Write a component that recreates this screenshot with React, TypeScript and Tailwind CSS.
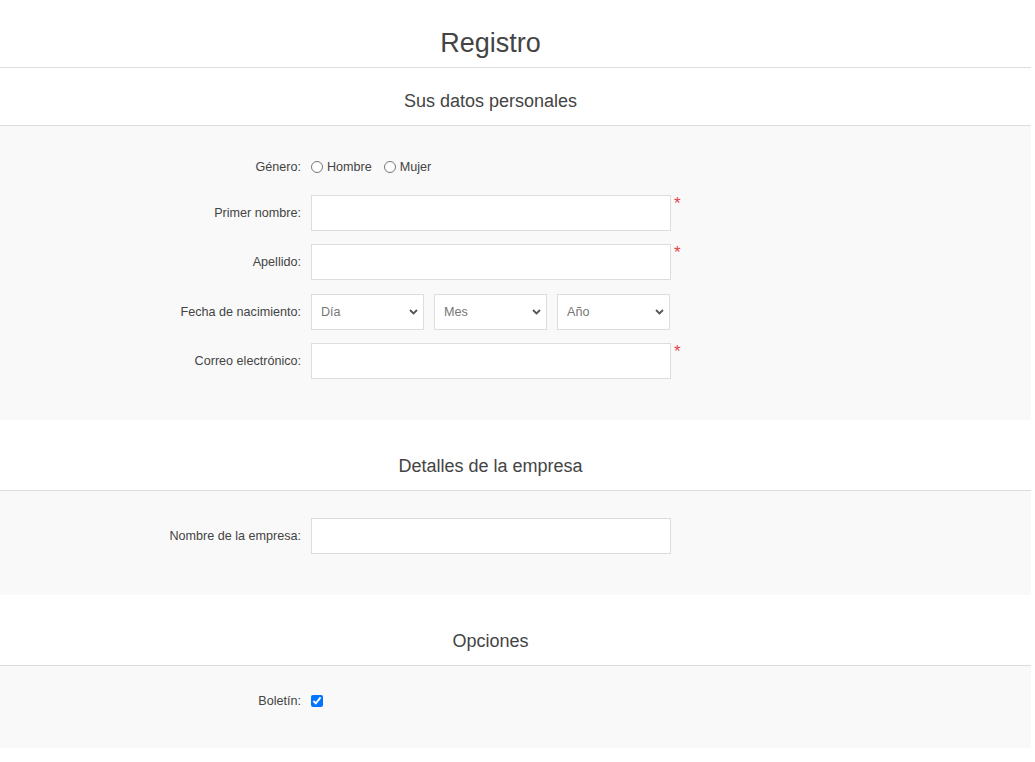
import React from "react";

const font = { fontFamily: '"Liberation Sans", Arial, sans-serif' };

function Label({ children }: { children: React.ReactNode }) {
  return (
    <div className="w-[301px] mr-[10px] text-right text-[12.6px] text-[#444] shrink-0">{children}</div>
  );
}

function Req() {
  return <span className="self-start ml-[3px] text-[17px] leading-[18px] text-[#e4434b]">*</span>;
}

function TextRow({ label, req, mb }: { label: string; req?: boolean; mb: string }) {
  return (
    <div className={`flex items-center ${mb}`}>
      <Label>{label}</Label>
      <input type="text" className="w-[360px] h-[36px] border border-[#ddd] bg-white px-[8px] text-[12.6px] outline-none" />
      {req && <Req />}
    </div>
  );
}

function Sel({ text }: { text: string }) {
  return (
    <div className="relative w-[113px] h-[36px]">
      <select className="appearance-none w-full h-full border border-[#ddd] bg-white pl-[9px] text-[12.6px] text-[#777] outline-none">
        <option>{text}</option>
      </select>
      <svg className="absolute right-[6px] top-[15px] pointer-events-none" width="9" height="6" viewBox="0 0 9 6">
        <path d="M1 1l3.5 3.5L8 1" stroke="#555" strokeWidth="1.8" fill="none" />
      </svg>
    </div>
  );
}

function Radio({ label, last }: { label: string; last?: boolean }) {
  return (
    <label className={`flex items-center ${last ? "" : "mr-[12px]"}`}>
      <span className="w-[12px] h-[12px] rounded-full border border-[#767676] bg-white mr-[4px]" />
      <span className="text-[12.6px] text-[#444]">{label}</span>
    </label>
  );
}

function Heading({ title, pt }: { title: string; pt: string }) {
  return (
    <div className={`border-b border-[#ddd] ${pt} pb-[14px]`}>
      <div className="w-[981px] text-center text-[18px] leading-[20px] text-[#444]">{title}</div>
    </div>
  );
}

export default function App() {
  return (
    <div className="w-[1031px] bg-white min-h-[762px]" style={font}>
      <div className="border-b border-[#ddd] pt-[27px] pb-[8px] h-[68px]">
        <h1 className="w-[981px] text-center text-[27px] leading-[32px] text-[#444]">Registro</h1>
      </div>

      <Heading title="Sus datos personales" pt="pt-[23px]" />
      <div className="bg-[#f9f9f9] pt-[27px] pb-[41px]">
        <div className="flex items-center h-[26px] pt-[2px] mb-[16px]">
          <Label>Género:</Label>
          <Radio label="Hombre" />
          <Radio label="Mujer" last />
        </div>
        <TextRow label="Primer nombre:" req mb="mb-[13px]" />
        <TextRow label="Apellido:" req mb="mb-[14px]" />
        <div className="flex items-center mb-[13px]">
          <Label>Fecha de nacimiento:</Label>
          <div className="flex gap-[10px]">
            <Sel text="Día" />
            <Sel text="Mes" />
            <Sel text="Año" />
          </div>
        </div>
        <TextRow label="Correo electrónico:" req mb="mb-0" />
      </div>

      <Heading title="Detalles de la empresa" pt="pt-[36px]" />
      <div className="bg-[#f9f9f9] pt-[27px] pb-[41px]">
        <TextRow label="Nombre de la empresa:" mb="mb-0" />
      </div>

      <Heading title="Opciones" pt="pt-[36px]" />
      <div className="bg-[#f9f9f9] pt-[28px] pb-[40px]">
        <div className="flex items-center h-[14px]">
          <Label>Boletín:</Label>
          <input type="checkbox" defaultChecked className="m-0 w-[12px] h-[12px] accent-[#0075ff]" />
        </div>
      </div>
    </div>
  );
}
